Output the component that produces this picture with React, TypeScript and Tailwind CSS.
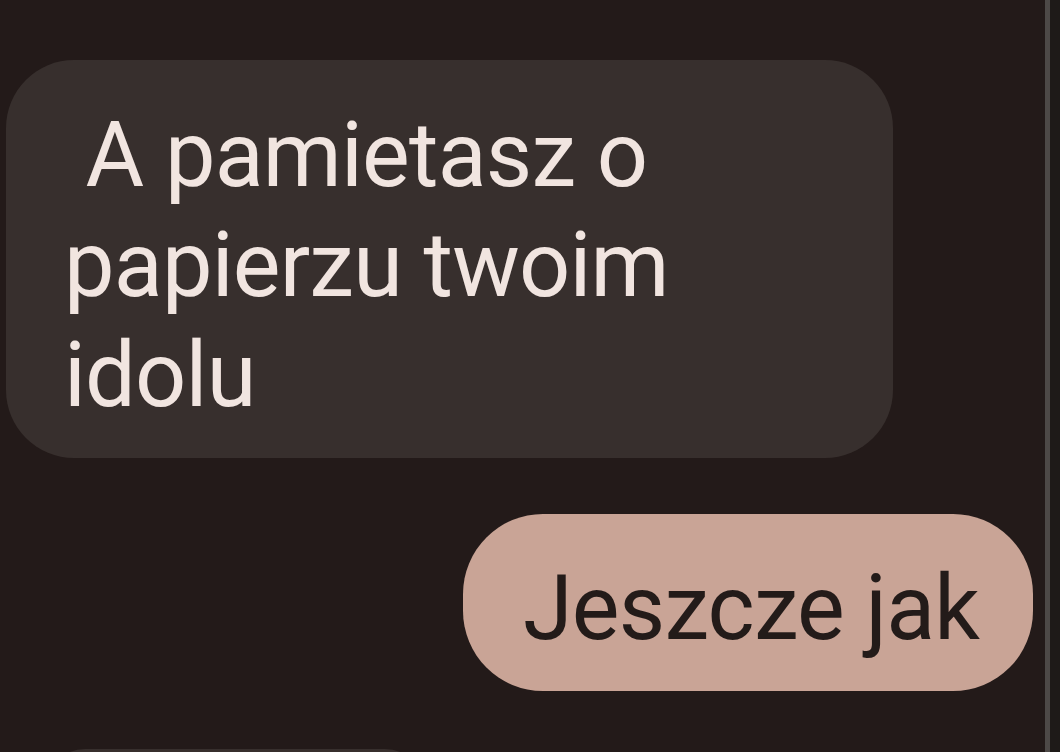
export default function App() {
  const font = { fontFamily: "Roboto, 'Noto Sans', sans-serif" };

  return (
    <div className="flex h-[752px] w-[1060px] overflow-hidden bg-[#231a19]" style={font}>
      <div className="flex w-[1045px] flex-col">
        <div className="h-[60px] shrink-0" />

        {/* incoming message */}
        <div className="flex pl-[6px]">
          <div className="w-[887px] rounded-[68px] bg-[#372f2d] pb-[27px] pl-[58px] pt-[41px] text-[90px] leading-[110px] tracking-[-0.8px] text-[#f1e5e0]">
            <span>&nbsp;A pamietasz o</span>
            <br />
            <span>papierzu twoim</span>
            <br />
            <span>idolu</span>
          </div>
        </div>

        {/* outgoing message */}
        <div className="mt-[56px] flex justify-end pr-[12px]">
          <div className="flex h-[177px] w-[570px] items-center rounded-[80px] bg-[#c9a496] pl-[60px] pt-[12px] text-[90px] leading-[110px] tracking-[-0.8px] text-[#231b19]">
            Jeszcze jak
          </div>
        </div>

        {/* next incoming message, cut off */}
        <div className="mt-[58px] flex pl-[45px]">
          <div className="h-[80px] w-[380px] rounded-[40px] bg-[#372f2d]" />
        </div>
      </div>

      {/* scrollbar edge */}
      <div className="w-[5px] bg-[#4d4947]" />
      <div className="flex-1 bg-[#1e1a18]" />
    </div>
  );
}
